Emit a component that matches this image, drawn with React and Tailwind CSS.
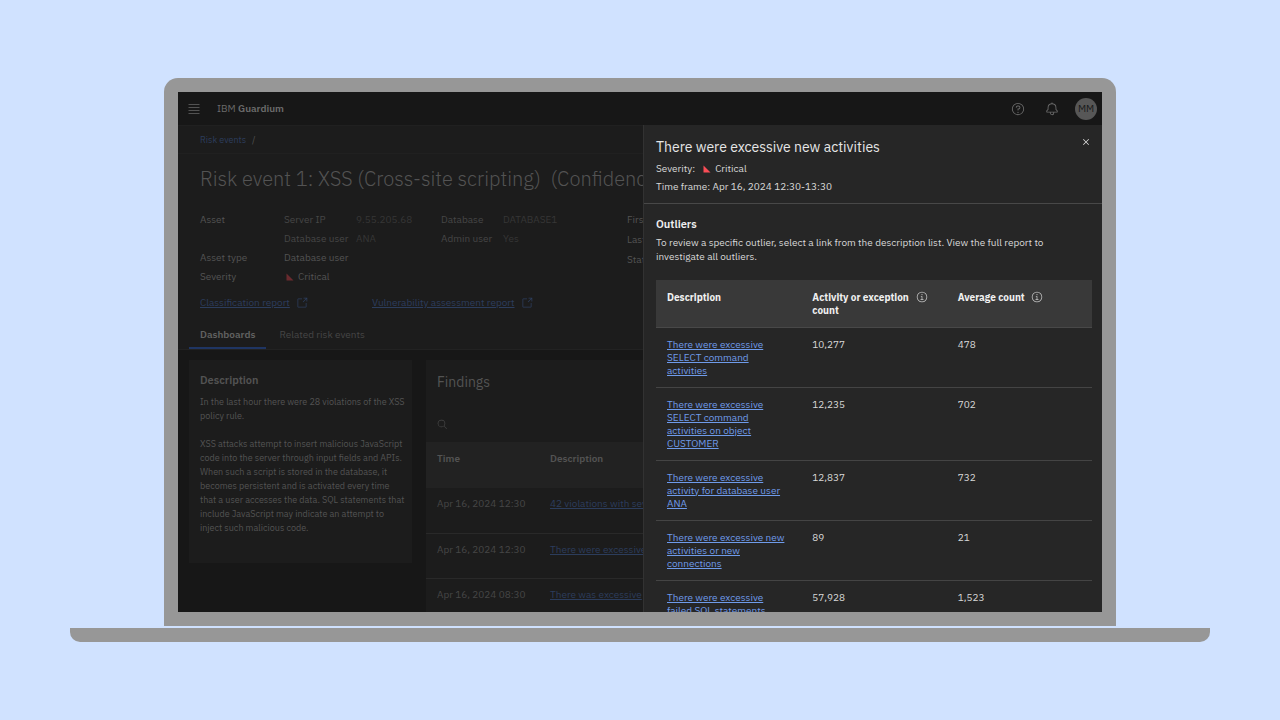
const DETAILS = [
  ["Asset", "Server IP", "9.55.205.68", "Database", "DATABASE1"],
  ["", "Database user", "ANA", "Admin user", "Yes"],
];

const FINDINGS = [
  { time: "Apr 16, 2024 12:30", text: "42 violations with severity" },
  { time: "Apr 16, 2024 12:30", text: "There were excessive" },
  { time: "Apr 16, 2024 08:30", text: "There was excessive" },
];

const OUTLIERS = [
  {
    text: "There were excessive SELECT command activities",
    count: "10,277",
    average: "478",
  },
  {
    text: "There were excessive SELECT command activities on object CUSTOMER",
    count: "12,235",
    average: "702",
  },
  {
    text: "There were excessive activity for database user ANA",
    count: "12,837",
    average: "732",
  },
  {
    text: "There were excessive new activities or new connections",
    count: "89",
    average: "21",
  },
  {
    text: "There were excessive failed SQL statements",
    count: "57,928",
    average: "1,523",
  },
];

const RING =
  "M16,2A14,14,0,1,0,30,16,14,14,0,0,0,16,2Zm0,26A12,12,0,1,1,28,16,12,12,0,0,1,16,28Z";

function Icon({ className, children }) {
  return (
    <svg
      viewBox="0 0 32 32"
      fill="currentColor"
      aria-hidden="true"
      className={`shrink-0 ${className}`}
    >
      {children}
    </svg>
  );
}

function InfoIcon() {
  return (
    <Icon className="size-3 text-[#c6c6c6]">
      <path d="M17 22V14H13v2h2v6H12v2h8V22Z" />
      <path d="M16,8a1.5,1.5,0,1,0,1.5,1.5A1.5,1.5,0,0,0,16,8Z" />
      <path d={RING} />
    </Icon>
  );
}

function LaunchIcon() {
  return (
    <Icon className="size-3">
      <path d="M26,28H6a2,2,0,0,1-2-2V6A2,2,0,0,1,6,4H16V6H6V26H26V16h2V26A2,2,0,0,1,26,28Z" />
      <path d="M20 2V4H26.586L18 12.586 19.414 14 28 5.414V12h2V2Z" />
    </Icon>
  );
}

function CriticalIcon({ className }) {
  return (
    <svg viewBox="0 0 8 8" aria-hidden="true" className={`size-2 ${className}`}>
      <path d="M0.5 0.5V7.5H7.5Z" fill="currentColor" />
    </svg>
  );
}

function TopBar() {
  return (
    <header className="flex h-[33px] shrink-0 items-center bg-[#171717] pr-[5px] pl-2.5 text-[#6b6b6b]">
      <button type="button" aria-label="Menu" className="text-[#525252]">
        <svg viewBox="0 0 12 12" className="size-3" aria-hidden="true">
          <path
            d="M0.5 1.5h11M0.5 4.5h11M0.5 7.5h11M0.5 10.5h11"
            stroke="currentColor"
          />
        </svg>
      </button>
      <p className="ml-[17px] text-[10px]">
        IBM <span className="font-semibold">Guardium</span>
      </p>
      <div className="ml-auto flex items-center gap-5">
        <button type="button" aria-label="Help">
          <Icon className="size-3.5">
            <path d={RING} />
            <circle cx="16" cy="23.5" r="1.5" />
            <path d="M17,8H15.5A4.49,4.49,0,0,0,11,12.5V13h2v-.5A2.5,2.5,0,0,1,15.5,10H17a2.5,2.5,0,0,1,0,5H15v4.5h2V17a4.5,4.5,0,0,0,0-9Z" />
          </Icon>
        </button>
        <button type="button" aria-label="Notifications">
          <Icon className="size-3.5">
            <path d="M28.7071,19.293,26,16.5859V13a10.0136,10.0136,0,0,0-9-9.9492V1H15V3.0508A10.0136,10.0136,0,0,0,6,13v3.5859L3.2929,19.293A1,1,0,0,0,3,20v3a1,1,0,0,0,1,1h7v.7768a5.152,5.152,0,0,0,4.5,5.1987A5.0057,5.0057,0,0,0,21,25V24h7a1,1,0,0,0,1-1V20A1,1,0,0,0,28.7071,19.293ZM19,25a3,3,0,0,1-6,0V24h6Zm8-3H5V20.4141L7.707,17.707A1,1,0,0,0,8,17V13a8,8,0,0,1,16,0v4a1,1,0,0,0,.293.707L27,20.4141Z" />
          </Icon>
        </button>
        <button
          type="button"
          className="-ml-1 flex size-[22px] items-center justify-center rounded-full bg-[#575757] text-[10px] text-[#171717]"
        >
          MM
        </button>
      </div>
    </header>
  );
}

function EventHeader() {
  return (
    <section className="border-b border-[#222222] bg-[#1c1c1c] text-[10px] text-[#535353]">
      <nav className="flex h-[29px] items-center gap-1.5 border-y border-[#202020] px-[22px] text-[9px]">
        <a href="#events" className="text-[#2c3d5c]">
          Risk events
        </a>
        <span>/</span>
      </nav>
      <h1 className="mt-[11px] overflow-hidden pl-[22px] text-[20px] leading-7 font-light whitespace-pre">
        {"Risk event 1: XSS (Cross-site scripting)  (Confidence"}
      </h1>
      <div className="mt-[17px] flex pl-[22px] leading-[19px]">
        <dl className="grid w-[427px] shrink-0 grid-cols-[84px_72px_85px_62px_1fr]">
          {DETAILS.map(([label, key, value, key2, value2]) => (
            <div key={key} className="contents">
              <dt>{label}</dt>
              <dt className="text-[#464646]">{key}</dt>
              <dd className="text-[#363636]">{value}</dd>
              <dt className="text-[#464646]">{key2}</dt>
              <dd className="text-[#363636]">{value2}</dd>
            </div>
          ))}
          <dt>Asset type</dt>
          <dd className="col-span-4">Database user</dd>
          <dt>Severity</dt>
          <dd className="col-span-4 flex items-center gap-1 pl-0.5">
            <CriticalIcon className="text-[#6a2a2e]" />
            Critical
          </dd>
        </dl>
        <ul className="min-w-0 flex-1 overflow-hidden leading-5 whitespace-nowrap">
          <li>First</li>
          <li>Last</li>
          <li>Status</li>
        </ul>
      </div>
      <div className="mt-2 flex px-[22px] leading-[18px] text-[#2c3d5c]">
        <a href="#classification" className="flex w-[172px] items-center gap-1.5">
          <span className="underline underline-offset-1">
            Classification report
          </span>
          <LaunchIcon />
        </a>
        <a href="#vulnerability" className="flex items-center gap-1.5">
          <span className="underline underline-offset-1">
            Vulnerability assessment report
          </span>
          <LaunchIcon />
        </a>
      </div>
      <div className="mt-[11px] flex pl-[11px] leading-6" role="tablist">
        <button
          type="button"
          role="tab"
          aria-selected="true"
          className="border-b-2 border-[#1f3563] px-[11px] font-semibold text-[#616161]"
        >
          Dashboards
        </button>
        <button
          type="button"
          role="tab"
          aria-selected="false"
          className="border-b-2 border-transparent px-[13px] text-[#464646]"
        >
          Related risk events
        </button>
      </div>
    </section>
  );
}

function DescriptionCard() {
  return (
    <article className="w-[223px] shrink-0 self-start bg-[#1c1c1c] pt-3 pr-1.5 pb-7 pl-[11px] text-[9px] leading-[14px] text-[#535353]">
      <h2 className="text-[11px] leading-4 font-semibold">Description</h2>
      <p className="mt-[7px]">
        In the last hour there were 28 violations of the XSS policy rule.
      </p>
      <p className="mt-3.5">
        XSS attacks attempt to insert malicious JavaScript code into the server
        through input fields and APIs. When such a script is stored in the
        database, it becomes persistent and is activated every time that a user
        accesses the data. SQL statements that include JavaScript may indicate
        an attempt to inject such malicious code.
      </p>
    </article>
  );
}

function FindingsCard() {
  return (
    <article className="min-w-0 flex-1 overflow-hidden bg-[#1c1c1c] text-[10px] text-[#535353]">
      <h2 className="px-[11px] pt-3 text-sm leading-5">Findings</h2>
      <button
        type="button"
        aria-label="Search findings"
        className="mt-[27px] mb-3 ml-[11px] block text-[#464646]"
      >
        <Icon className="size-[11px]">
          <path d="M29,27.5859l-7.5521-7.5521a11.0177,11.0177,0,1,0-1.4141,1.4141L27.5859,29ZM4,13a9,9,0,1,1,9,9A9.01,9.01,0,0,1,4,13Z" />
        </Icon>
      </button>
      <table className="w-full table-fixed text-left">
        <thead>
          <tr className="h-[46px] bg-[#222222] align-top leading-[14px]">
            <th className="w-[113px] pt-2.5 pl-[11px] font-semibold">Time</th>
            <th className="pt-2.5 pl-[11px] font-semibold">Description</th>
          </tr>
        </thead>
        <tbody>
          {FINDINGS.map(({ time, text }) => (
            <tr
              key={text}
              className="h-[45px] border-b border-[#292929] align-top leading-[14px]"
            >
              <td className="pt-[9px] pl-[11px] whitespace-nowrap text-[#464646]">
                {time}
              </td>
              <td className="overflow-hidden pt-[9px] pl-[11px] whitespace-nowrap">
                <a
                  href="#finding"
                  className="text-[#2c3d5c] underline underline-offset-1"
                >
                  {text}
                </a>
              </td>
            </tr>
          ))}
        </tbody>
      </table>
    </article>
  );
}

function OutlierPanel() {
  return (
    <aside className="w-[459px] shrink-0 overflow-hidden border-l border-[#323232] bg-[#262626] text-[10px] text-[#d8d8d8]">
      <div className="flex items-start border-b border-[#484848] px-3 pt-3 pb-[7px]">
        <div>
          <h2 className="text-sm leading-5 text-[#e6e6e6]">
            There were excessive new activities
          </h2>
          <p className="mt-[3px] flex items-center gap-1 leading-[18px]">
            <span className="mr-1">Severity:</span>
            <CriticalIcon className="text-[#fa4d56]" />
            Critical
          </p>
          <p className="leading-[18px]">
            Time frame: Apr 16, 2024 12:30-13:30
          </p>
        </div>
        <button
          type="button"
          aria-label="Close"
          className="-mt-px -mr-0.5 ml-auto text-[#e6e6e6]"
        >
          <Icon className="size-3">
            <path d="M24 9.4 22.6 8 16 14.6 9.4 8 8 9.4 14.6 16 8 22.6 9.4 24 16 17.4 22.6 24 24 22.6 17.4 16Z" />
          </Icon>
        </button>
      </div>
      <div className="pt-3 pr-2.5 pl-3">
        <h3 className="text-[11px] leading-4 font-semibold text-[#f0f0f0]">
          Outliers
        </h3>
        <p className="mt-1 pr-7 leading-[14px]">
          To review a specific outlier, select a link from the description list.
          View the full report to investigate all outliers.
        </p>
        <table className="mt-4 w-full table-fixed text-left leading-[13px]">
          <thead>
            <tr className="h-[47px] border-b border-[#484848] bg-[#393939] align-top font-semibold text-[#f0f0f0]">
              <th className="px-[11px] pt-[11px]">Description</th>
              <th className="pt-[11px] pl-[11px]">
                <span className="flex items-start gap-[7px]">
                  <span className="w-[97px]">Activity or exception count</span>
                  <InfoIcon />
                </span>
              </th>
              <th className="pt-[11px] pl-[11px]">
                <span className="flex items-start gap-1.5">
                  Average count
                  <InfoIcon />
                </span>
              </th>
            </tr>
          </thead>
          <tbody>
            {OUTLIERS.map(({ text, count, average }) => (
              <tr key={text} className="border-b border-[#444444] align-top">
                <td className="px-[11px] py-2.5">
                  <a
                    href="#outlier"
                    className="text-[#6f9bea] underline underline-offset-1"
                  >
                    {text}
                  </a>
                </td>
                <td className="px-[11px] py-2.5">{count}</td>
                <td className="px-[11px] py-2.5">{average}</td>
              </tr>
            ))}
          </tbody>
        </table>
      </div>
    </aside>
  );
}

export default function App() {
  return (
    <div className="flex min-h-screen flex-col justify-center bg-[#d0e2ff] px-[70px] font-['IBM_Plex_Sans','Inter',sans-serif]">
      {/* Laptop lid */}
      <div className="mx-[94px] rounded-t-[14px] bg-[#979797] p-3.5">
        <div className="flex aspect-video flex-col overflow-hidden bg-[#171717]">
          <TopBar />
          <div className="flex min-h-0 flex-1">
            <main className="flex min-w-0 flex-1 flex-col overflow-hidden">
              <EventHeader />
              <div className="flex min-h-0 flex-1 gap-3.5 pt-2.5 pl-[11px]">
                <DescriptionCard />
                <FindingsCard />
              </div>
            </main>
            <OutlierPanel />
          </div>
        </div>
      </div>
      {/* Laptop base */}
      <div className="mt-0.5 h-3.5 rounded-b-[10px] bg-[#979797]" />
    </div>
  );
}
